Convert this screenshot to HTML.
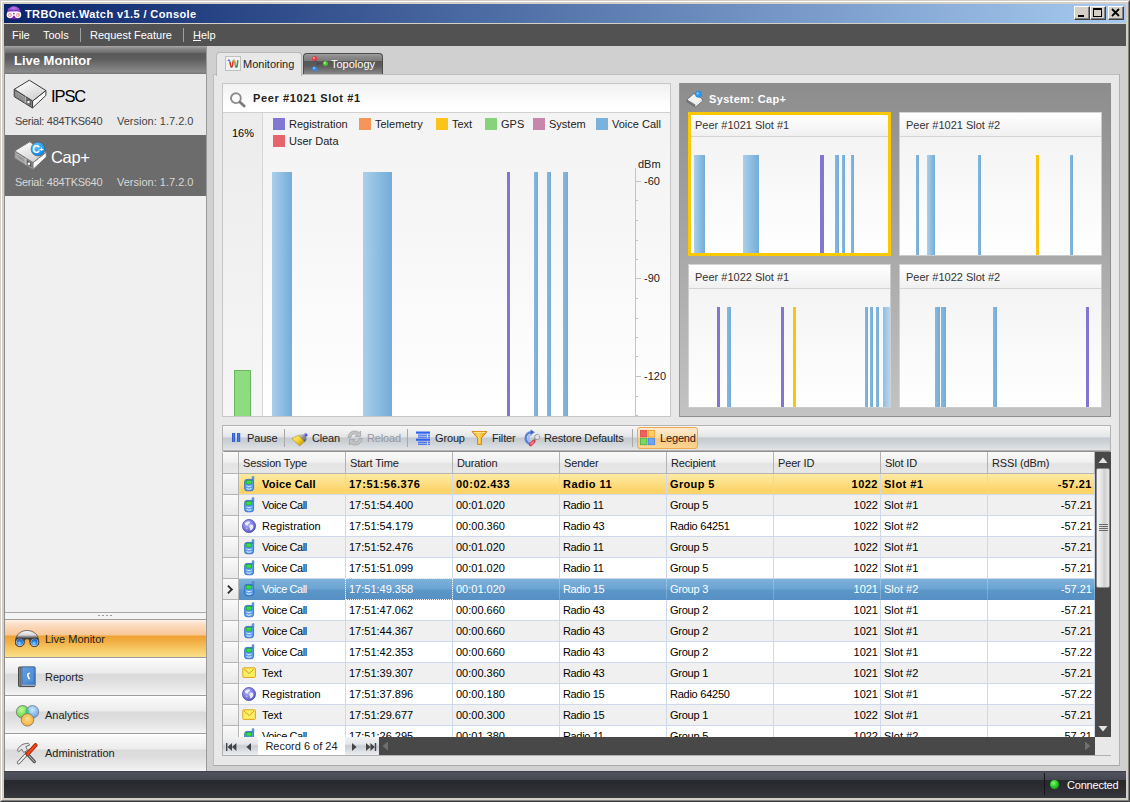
<!DOCTYPE html>
<html lang="en">
<head>
<meta charset="utf-8">
<title>TRBOnet.Watch v1.5 / Console</title>
<style>
*{box-sizing:border-box;margin:0;padding:0}
html,body{width:1130px;height:802px;overflow:hidden;background:#d4d0c8}
body{font-family:"Liberation Sans",sans-serif;font-size:11px;color:#000;position:relative}
div,span,svg{position:absolute}
span{white-space:nowrap}
/* window frame */
#frame{left:0;top:0;width:1130px;height:802px;background:#d4d0c8;border:1px solid;border-color:#d4d0c8 #404040 #404040 #d4d0c8}
#frame2{left:1px;top:1px;width:1128px;height:800px;border:1px solid;border-color:#fff #808080 #808080 #fff}
#title{left:4px;top:4px;width:1122px;height:19px;background:linear-gradient(90deg,#0a246a 0%,#a6caf0 100%)}
#title .tt{left:21px;top:4px;color:#fff;font-weight:bold;font-size:11px;letter-spacing:.4px}
.cb{top:6px;width:16px;height:14px;background:#d4d0c8;border:1px solid;border-color:#fff #404040 #404040 #fff;box-shadow:inset -1px -1px 0 #808080}
#menu{left:4px;top:24px;width:1122px;height:22px;background:#525252}
#menu span{top:5px;color:#fff}
#menu i{position:absolute;top:4px;width:1px;height:14px;background:#a0a0a0}
/* sidebar */
#side{left:4px;top:46px;width:203px;height:725px;background:#f0f0f0;border-left:1px solid #8c8c8c;border-right:1px solid #9a9a9a}
#shead{left:0;top:0;width:201px;height:28px;background:linear-gradient(180deg,#ababab 0,#9a9a9a 1px,#858585 3px,#6c6c6c 7px,#5a5a5a 7px,#5d5d5d 13px,#8b8b8b 26px,#7a7a7a 27px,#7a7a7a 28px)}
#shead span{left:9px;top:7px;color:#fff;font-weight:bold;font-size:13px}
.sitem{left:0;width:201px;height:61px}
.sitem .nm{left:46px;top:13px;font-size:16.5px;letter-spacing:-1.1px}
.sitem .s1{left:10px;top:41px;color:#444;letter-spacing:-.3px}
.sitem .s2{left:112px;top:41px;color:#444}
#it1{top:28px;background:#e9e9e9}
#it2{top:89px;background:#6c6c6c}
#it2 .nm{color:#fff;letter-spacing:-.3px}
#it2 .s1,#it2 .s2{color:#d8d8d8}
#split{left:0;top:566px;width:201px;height:7px;background:#f4f4f4;border-top:1px solid #a8a8a8}
.nav{left:0;width:201px;height:38px;background:linear-gradient(180deg,#9c9c9c 0,#9c9c9c 1px,#fff 1px,#fff 2px,#f8f8f8 4px,#ececec 16px,#dadada 17px,#dedede 24px,#eeeeee 35px,#f6f6f6 38px)}
.nav span{left:40px;top:14px;color:#222}
.nav.on{background:linear-gradient(180deg,#9c9c9c 0,#9c9c9c 1px,#fff2e6 1px,#fbdcc2 6px,#f9c796 16px,#efa234 17px,#f2ad42 22px,#f7c864 30px,#fbe08c 38px)}
/* status */
#status{left:4px;top:771px;width:1122px;height:27px;background:linear-gradient(180deg,#3c3e46 0,#50535c 2px,#4a4d56 5px,#44474f 9px,#27292d 9px,#2a2c31 16px,#36383e 27px)}
#status span{left:1063px;top:8px;color:#fff;letter-spacing:-.2px}
#status i{position:absolute;left:1040px;top:2px;width:1px;height:22px;background:#15161a}
#status b{position:absolute;left:1046px;top:9px;width:9px;height:9px;border-radius:50%;background:radial-gradient(circle at 40% 35%,#7dfc6a 0,#25c425 50%,#128a12 100%)}
/* main */
#main{left:207px;top:46px;width:919px;height:725px;background:#d0d0d0}
#page{left:213px;top:74px;width:907px;height:692px;background:#e8e8e8;border:1px solid #bdbdbd;border-right-color:#b0b0b0;border-bottom-color:#a8a8a8}
.tab{height:22px;border:1px solid #a0a0a0;border-bottom:none;border-radius:4px 4px 0 0}
#tab1{left:216px;top:52px;width:86px;height:24px;background:#e8e8e8;border-color:#b8b8b8}
#tab1 span{left:26px;top:5px;color:#222}
#tab2{left:303px;top:53px;width:80px;height:21px;background:linear-gradient(180deg,#a2a2a2 0,#8e8e8e 2px,#7a7a7a 7px,#565656 7px,#5c5c5c 12px,#888 20px);border-color:#4c4c4c}
#tab2 span{left:27px;top:4px;color:#fff}
/* chart panel */
#cp{left:222px;top:83px;width:449px;height:334px;background:linear-gradient(180deg,#f3f3f3 0,#f6f6f6 40%,#fff 100%);border:1px solid #c6c6c6}
#cph{left:0;top:0;width:447px;height:29px;background:linear-gradient(180deg,#f1f1f1 0,#fafafa 50%,#fff 85%);border-bottom:1px solid #d0d0d0}
#cph span{left:30px;top:8px;font-weight:bold;font-size:11px;color:#222;letter-spacing:.62px}
#pc{left:0;top:29px;width:40px;height:303px;background:linear-gradient(180deg,#ececec,#f6f6f6);border-right:1px solid #d6d6d6}
#pc span{left:9px;top:14px}
#gb{left:11px;top:257px;width:17px;height:46px;background:#8edb80;border:1px solid #6ab85e;border-bottom:none}
.lg{width:12px;height:12px}
.lt{color:#222}
.bar.b{background:linear-gradient(90deg,#aacfea,#74acd8)}
.bar.bl{background:linear-gradient(90deg,#8fbde2,#b8d6ec)}
.bar.bs{background:linear-gradient(90deg,#86b8de,#74acd8)}
.bar.p{background:#8177d3}
.bar.y{background:#fcc50d}
.ax{color:#222}
/* system panel */
#sp{left:679px;top:83px;width:432px;height:334px;background:linear-gradient(180deg,#8d8d8d,#c3c3c3);border:1px solid #8e8e8e;border-top-color:#8d8d8d;border-left-color:#999}
#sp>span{left:29px;top:9px;color:#fff;font-weight:bold;letter-spacing:.35px}
.mini{width:203px;height:144px;background:linear-gradient(180deg,#f4f4f4 0,#f4f4f4 24px,#f7f7f7 40%,#fff 100%);border:1px solid rgba(110,110,110,.3)}
.mini .mh{left:0;top:0;width:201px;height:24px;background:linear-gradient(180deg,#fff,#f0f0f0);border-bottom:1px solid #d4d4d4}
.mini span{left:6px;top:6px;color:#333}
.mini.on{border:3px solid #fcc800}
.mini.on .mh{width:197px;height:22px}
.mini.on span{left:4px;top:4px}
/* toolbar */
#tb{left:222px;top:425px;width:889px;height:26px;background:linear-gradient(180deg,#f6f6f6 0,#f0f0f0 5px,#e2e4e6 11px,#c4cad0 12px,#ccd1d6 16px,#e2e4e6 24px);border:1px solid #b4b4b4}
#tb span{top:6px;color:#222;letter-spacing:-.15px}
#tb span.dis{color:#9898a0}
#tb i{position:absolute;top:3px;width:1px;height:18px;background:#a8a8a8}
#lgb{left:414px;top:1px;width:61px;height:22px;border:1px solid #eda850;border-radius:3px;background:linear-gradient(180deg,#fdebd0 0,#fcdcaa 9px,#fac67c 11px,#fbcf8a 16px,#fcd898 22px)}
/* grid */
#grid{left:222px;top:451px;width:889px;height:305px;background:#fff;border:1px solid #b0b0b0;border-top-color:#8e8e8e;border-radius:3px 0 0 0}
.gh{background:linear-gradient(180deg,#fafafa 0,#f0f0f0 10px,#e3e3e3 12px,#e8e8e8 21px)}
.ghc{border-right:1px solid #b4b4b4;border-bottom:1px solid #b4b4b4}
.ghc span{left:4px;top:5px;color:#222;letter-spacing:-.15px}
.row{left:223px;width:872px;height:21px;background:#fff}
.row.alt{background:#f0f0f0}
.row.hot{background:linear-gradient(180deg,#fdeaa4 0,#fddf86 9px,#fcd66c 15px,#fcd468 20px);font-weight:bold;letter-spacing:.5px}
.row.sel{background:linear-gradient(180deg,#7db2da 0,#6ba3d2 10px,#5c97c9 11px,#558fc4 21px);color:#fff}
.row .ind{left:0;top:0;width:16px;height:21px;background:linear-gradient(180deg,#fafafa,#e8e8e8);border-right:1px solid #b4b4b4;border-bottom:1px solid #b4b4b4}
.row .ind i{position:absolute;left:2px;top:7px;width:7px;height:7px;border-right:2.4px solid #2a2a2a;border-top:2.4px solid #2a2a2a;transform:rotate(45deg) scale(.9,.9);transform-origin:center}
.c{top:0;height:21px;width:107px;border-right:1px solid #d0d8ec;border-bottom:1px solid #d0d8ec}
.c span{left:3px;top:4px}
.c.num span{left:auto;right:2px}
.c0{left:16px}.c1{left:123px}.c2{left:230px}.c3{left:337px;letter-spacing:-.35px}.c4{left:444px;letter-spacing:-.25px}.c5{left:551px}.c6{left:658px}.c7{left:765px}
.c0 span{left:23px}
.row.hot .c3{letter-spacing:.5px}.row.hot .c4{letter-spacing:.35px}
.ri{left:3px;top:2px}
.row.sel .c{border-right-color:rgba(255,255,255,.22);border-bottom-color:transparent}
.c.foc::after{content:"";position:absolute;left:-1px;top:-1px;width:108px;height:22px;box-sizing:border-box;border:1px dotted #f4f8fc}
#gclip{left:223px;top:452px;width:872px;height:285px;overflow:hidden}
/* scrollbars */
#vs{left:1095px;top:452px;width:16px;height:285px;background:#484848}
#vth{left:1px;top:16px;width:14px;height:120px;border:1px solid #8a8a8a;border-radius:2px;background:linear-gradient(90deg,#f4f4f4 0,#e4e4e4 40%,#cfcfcf 60%,#e6e6e6 100%)}
#hs{left:379px;top:737px;width:716px;height:18px;background:#484848}
#nvb{left:223px;top:737px;width:156px;height:18px;background:linear-gradient(180deg,#f2f2f2 0,#e4e6ea 7px,#c8ccd4 9px,#d4d8de 12px,#eceef0 18px)}
#nvb span{left:35px;top:0;color:#222;background:#fff;height:18px;line-height:19px;width:87px;text-align:center}
#corner{left:1095px;top:737px;width:16px;height:18px;background:#e8e8e8}
</style>
</head>
<body>
<div id="frame"></div><div id="frame2"></div>
<div id="title">
<svg style="left:2px;top:2px" width="16" height="16" viewBox="0 0 16 16"><defs><radialGradient id="ow" cx=".5" cy=".2" r=".8"><stop offset="0" stop-color="#c07cf0"/><stop offset=".6" stop-color="#8a30c0"/><stop offset="1" stop-color="#5a1090"/></radialGradient></defs><ellipse cx="7.9" cy="6.9" rx="7" ry="6.7" fill="url(#ow)"/><path d="M2.5 5.6Q7.9 2.4 13.3 5.6" fill="none" stroke="#5a1a98" stroke-width=".8"/><circle cx="4" cy="8.8" r="3.4" fill="#fff"/><circle cx="11.8" cy="8.8" r="3.4" fill="#fff"/><rect x="5" y="5.6" width="6" height="4" fill="#fff"/><circle cx="3.9" cy="9" r="2.1" fill="#f4a0a8"/><circle cx="11.9" cy="9" r="2.1" fill="#f4a0a8"/><circle cx="3.6" cy="9.4" r=".8" fill="#fff"/><circle cx="11.6" cy="9.4" r=".8" fill="#fff"/><rect x="7" y="7.2" width="1.8" height="1" fill="#6a1aa8"/><path d="M6.2 12.4L7.9 9.9L9.6 12.4Z" fill="#7a28b0"/></svg>
<span class="tt">TRBOnet.Watch v1.5 / Console</span>
</div>
<div class="cb" style="left:1074px"><svg width="14" height="12" style="left:0;top:0"><rect x="3" y="8" width="6" height="2" fill="#000"/></svg></div>
<div class="cb" style="left:1090px"><svg width="14" height="12" style="left:0;top:0"><rect x="2.5" y="1.5" width="8" height="8" fill="none" stroke="#000"/><rect x="2" y="1" width="9" height="2" fill="#000"/></svg></div>
<div class="cb" style="left:1108px"><svg width="14" height="12" style="left:0;top:0"><path d="M3 2l7 7M10 2l-7 7" stroke="#000" stroke-width="1.8"/></svg></div>
<div id="menu">
<span style="left:8px">File</span><span style="left:39px">Tools</span><i style="left:76px"></i><span style="left:86px">Request Feature</span><i style="left:179px"></i><span style="left:189px"><u>H</u>elp</span>
</div>

<div id="side">
<div id="shead"><span>Live Monitor</span></div>
<div class="sitem" id="it1"><svg style="left:3px;top:2px" width="50" height="38" viewBox="0 0 50 38"><defs><linearGradient id="dg1" x1="0.2" y1="0" x2="0.8" y2="1"><stop offset="0" stop-color="#ffffff"/><stop offset="1" stop-color="#cdcdcd"/></linearGradient></defs><g transform="translate(0,0)"><path d="M6.2 13.2L24.5 25V32L6.2 20.6Z" fill="#8a8a8a" stroke="#3c3c3c" stroke-linejoin="round"/><path d="M24.6 25L37.9 14.5V19.4L24.6 31.9Z" fill="#fbfbfb" stroke="#3c3c3c" stroke-linejoin="round"/><path d="M21.3 4.2L37.9 14.5L24.6 25L6.3 13.3Z" fill="url(#dg1)" stroke="#3c3c3c" stroke-linejoin="round"/><path d="M8.8 16.2L15.8 20.6V24.2L8.8 19.8Z" fill="#b4b4b4"/><path d="M9 17.6L15.6 21.8M9 19L15.6 23.2" stroke="#6a6a6a" stroke-width=".7"/><path d="M17.3 20.4V27.3" stroke="#c8c8c8" stroke-width=".8"/><path d="M18.4 22.2L23.2 25.2V30L18.4 27Z" fill="#5e5e5e"/><rect x="19.4" y="25" width="2.2" height="2.2" fill="#fff"/></g></svg><span class="nm">IPSC</span><span class="s1">Serial: 484TKS640</span><span class="s2">Version: 1.7.2.0</span></div>
<div class="sitem" id="it2"><svg style="left:3px;top:1px" width="50" height="38" viewBox="0 0 50 38"><defs><linearGradient id="dg2" x1="0.2" y1="0" x2="0.8" y2="1"><stop offset="0" stop-color="#ffffff"/><stop offset="1" stop-color="#cdcdcd"/></linearGradient></defs><g transform="translate(0.4,1.6)"><path d="M6.2 13.2L24.5 25V32L6.2 20.6Z" fill="#a6a6a6" stroke="#777" stroke-linejoin="round"/><path d="M24.6 25L37.9 14.5V19.4L24.6 31.9Z" fill="#fbfbfb" stroke="#777" stroke-linejoin="round"/><path d="M21.3 4.2L37.9 14.5L24.6 25L6.3 13.3Z" fill="url(#dg2)" stroke="#777" stroke-linejoin="round"/><path d="M8.8 16.2L15.8 20.6V24.2L8.8 19.8Z" fill="#c4c4c4"/><path d="M9 17.6L15.6 21.8M9 19L15.6 23.2" stroke="#6a6a6a" stroke-width=".7"/><path d="M17.3 20.4V27.3" stroke="#c8c8c8" stroke-width=".8"/><path d="M18.4 22.2L23.2 25.2V30L18.4 27Z" fill="#5e5e5e"/><rect x="19.4" y="25" width="2.2" height="2.2" fill="#fff"/></g><defs><radialGradient id="cb" cx=".4" cy=".3" r=".8"><stop offset="0" stop-color="#6cc4ff"/><stop offset=".6" stop-color="#1c9cf4"/><stop offset="1" stop-color="#0c78d8"/></radialGradient></defs><circle cx="30.1" cy="13" r="7" fill="url(#cb)" stroke="#555" stroke-width=".6"/><text x="24.2" y="17" font-family="Liberation Sans,sans-serif" font-weight="bold" font-size="10.5" fill="#fff">C</text><text x="31" y="15.7" font-family="Liberation Sans,sans-serif" font-weight="bold" font-size="8" fill="#fff">+</text></svg><span class="nm">Cap+</span><span class="s1">Serial: 484TKS640</span><span class="s2">Version: 1.7.2.0</span></div>
<div id="split"><svg style="left:93px;top:1px" width="16" height="3"><g fill="#9a9a9a"><rect x="0" y="1" width="2" height="1"/><rect x="4" y="1" width="2" height="1"/><rect x="8" y="1" width="2" height="1"/><rect x="12" y="1" width="2" height="1"/></g></svg></div>
<div class="nav on" style="top:573px"><svg style="left:10px;top:11px" width="26" height="20" viewBox="0 0 26 20"><defs><linearGradient id="bg1" x1="0" y1="0" x2="0" y2="1"><stop offset="0" stop-color="#fafafa"/><stop offset=".28" stop-color="#d8d8d8"/><stop offset=".5" stop-color="#3c3c3c"/><stop offset=".75" stop-color="#6a6a6a"/><stop offset="1" stop-color="#3a3a3a"/></linearGradient><radialGradient id="bl" cx=".45" cy=".7" r=".75"><stop offset="0" stop-color="#9ad4ff"/><stop offset=".55" stop-color="#2c84e0"/><stop offset="1" stop-color="#0a4ca8"/></radialGradient></defs><path d="M.3 12.5C.3 3.4 7 .5 12.1 .5C17.2 .5 23.9 3.4 23.9 12.5V13C23.9 17.6 15 17.6 15 13C15 10 13.6 8.8 12.1 8.8C10.6 8.8 9.2 10 9.2 13C9.2 17.6 .3 17.6 .3 13Z" fill="url(#bg1)" stroke="#3a3a3a" stroke-width=".7"/><circle cx="4.8" cy="12.4" r="4.2" fill="#e6e6e6" stroke="#2e2e2e" stroke-width=".8"/><circle cx="19.4" cy="12.4" r="4.2" fill="#e6e6e6" stroke="#2e2e2e" stroke-width=".8"/><circle cx="4.8" cy="12.3" r="3.2" fill="url(#bl)"/><circle cx="19.4" cy="12.3" r="3.2" fill="url(#bl)"/></svg><span>Live Monitor</span></div>
<div class="nav" style="top:611px"><svg style="left:12px;top:9px" width="20" height="22" viewBox="0 0 20 22"><defs><linearGradient id="bk" x1="0" y1="0" x2="1" y2="1"><stop offset="0" stop-color="#6aa6e6"/><stop offset="1" stop-color="#3a78c4"/></linearGradient></defs><rect x="1.5" y="1" width="16.5" height="19.6" rx="1" fill="#555" stroke="#333" stroke-width=".8"/><rect x="5" y="1" width="13" height="18" fill="url(#bk)" stroke="#2d5c9c" stroke-width=".6"/><rect x="2.2" y="1.4" width="1" height="18.6" fill="#8a8a8a"/><rect x="3.8" y="1.4" width=".8" height="18.6" fill="#9a9a9a"/><rect x="7" y="3.5" width="9" height="12.5" fill="#5a96dc" opacity=".7"/><path d="M12.5 6.5c-2 .4-3 2-2.4 3.8c.5 1.4 1.4 1.6 1.2 3h1.6c.4-1.8-1-2.4-1.2-3.6c-.2-1.2.6-2 1.4-2.4z" fill="#fff"/><path d="M5 19.2h13" stroke="#dfe8f4" stroke-width=".8"/></svg><span>Reports</span></div>
<div class="nav" style="top:649px"><svg style="left:10px;top:9px" width="26" height="24" viewBox="0 0 26 24"><defs><radialGradient id="ag" cx=".4" cy=".35" r=".7"><stop offset="0" stop-color="#c4f8a0"/><stop offset="1" stop-color="#4cd428"/></radialGradient><radialGradient id="ab" cx=".5" cy=".35" r=".7"><stop offset="0" stop-color="#cce6ff"/><stop offset="1" stop-color="#4a98f0"/></radialGradient><radialGradient id="ao" cx=".5" cy=".4" r=".7"><stop offset="0" stop-color="#ffdc88"/><stop offset="1" stop-color="#f8a41c"/></radialGradient></defs><circle cx="7.6" cy="7.8" r="6.3" fill="url(#ag)" stroke="#707070" stroke-width=".8"/><circle cx="17.4" cy="7.8" r="6.3" fill="url(#ab)" stroke="#707070" stroke-width=".8" opacity=".92"/><path d="M12.5 3.9a6.3 6.3 0 0 1 0 7.8a6.3 6.3 0 0 1 0-7.8z" fill="#38d060" opacity=".85"/><circle cx="12.5" cy="15.8" r="6.3" fill="url(#ao)" stroke="#707070" stroke-width=".8" opacity=".93"/></svg><span>Analytics</span></div>
<div class="nav" style="top:687px"><svg style="left:10px;top:9px" width="26" height="24" viewBox="0 0 26 24"><path d="M3.6 20.6L14.8 8.6" stroke="#555" stroke-width="3.4" stroke-linecap="round"/><path d="M3.6 20.6L14.8 8.6" stroke="#f4f4f4" stroke-width="2" stroke-linecap="round"/><path d="M2.4 8.2C4 4 8 1 13.6 1.4L14.6 3.2L10.8 4.6L12.6 8.4L8.6 10.4L6.8 7.2L3.6 9.8Z" fill="#e6e6e6" stroke="#555" stroke-width=".8" stroke-linejoin="round"/><path d="M11.6 11.4L19.4 19.6" stroke="#444" stroke-width="3" stroke-linecap="round"/><path d="M11.6 11.4L19.4 19.6" stroke="#b0b0b0" stroke-width="1.2" stroke-linecap="round"/><path d="M12.6 12L20.6 3.2" stroke="#a82000" stroke-width="4" stroke-linecap="round"/><path d="M12.6 12L20.6 3.2" stroke="#f04818" stroke-width="2.4" stroke-linecap="round"/></svg><span>Administration</span></div>
</div>

<div id="main"></div>
<div id="page"></div>
<div class="tab" id="tab2"><svg style="left:6px;top:1px" width="22" height="18" viewBox="0 0 22 18"><path d="M4.6 3.6L8 8.6L4.6 13.6M8 8.6H15" fill="none" stroke="#444" stroke-width=".7"/><circle cx="4.6" cy="3.6" r="2.5" fill="#e63a44"/><circle cx="4" cy="3" r=".9" fill="#f8a8a8"/><circle cx="4.6" cy="13.7" r="2.5" fill="#3a86e0"/><circle cx="4" cy="13.1" r=".9" fill="#a8d0f8"/><circle cx="15.4" cy="8.5" r="2.5" fill="#4cc82c"/><circle cx="14.8" cy="7.9" r=".9" fill="#c0f4a8"/></svg><span>Topology</span></div>
<div class="tab" id="tab1"><svg style="left:8px;top:3px" width="16" height="15" viewBox="0 0 16 15"><rect x=".5" y=".5" width="15" height="14" fill="#f2f2f2" stroke="#c0c0c0"/><path d="M3 5C3.6 3.4 4.6 3.6 5 6L5.6 9.6C6 11.6 7 11.6 7.4 9.6L8 5.6C8.4 3.6 9.4 3.6 9.8 5.6L10.4 9.6C10.8 11.6 11.8 11.6 12.2 9.6L12.8 4.4" fill="none" stroke="#3a7ad8" stroke-width="1.2"/><path d="M5 6L5.6 9.6C6 11.6 7 11.6 7.4 9.6L8 5.6" fill="none" stroke="#e03820" stroke-width="1.3"/><path d="M8 5.6C8.4 3.6 9.4 3.6 9.8 5.6L10.4 9.6" fill="none" stroke="#f0a010" stroke-width="1.3"/><path d="M10.4 9.6C10.8 11.6 11.8 11.6 12.2 9.6L12.8 4.4" fill="none" stroke="#30a030" stroke-width="1.3"/></svg><span>Monitoring</span></div>

<div id="cp">
<div id="cph"><svg style="left:6px;top:7px" width="18" height="17" viewBox="0 0 18 17"><circle cx="6.9" cy="7.2" r="4.9" fill="#fbfbfb" stroke="#8c8c8c" stroke-width="1.9"/><path d="M10.8 11L15.2 15" stroke="#7c7c7c" stroke-width="2.8" stroke-linecap="round"/></svg><span>Peer #1021 Slot #1</span></div>
<div id="pc"><span>16%</span><div id="gb"></div></div>
</div>
<div class="lg" style="left:273px;top:118px;background:#8277d2"></div><span class="lt" style="left:289px;top:118px">Registration</span>
<div class="lg" style="left:359px;top:118px;background:#f4965a"></div><span class="lt" style="left:375px;top:118px">Telemetry</span>
<div class="lg" style="left:436px;top:118px;background:#fcc419"></div><span class="lt" style="left:452px;top:118px">Text</span>
<div class="lg" style="left:485px;top:118px;background:#86d37a"></div><span class="lt" style="left:501px;top:118px">GPS</span>
<div class="lg" style="left:533px;top:118px;background:#c986ac"></div><span class="lt" style="left:549px;top:118px">System</span>
<div class="lg" style="left:596px;top:118px;background:#7ab2dc"></div><span class="lt" style="left:612px;top:118px">Voice Call</span>
<div class="lg" style="left:273px;top:135px;background:#e5646e"></div><span class="lt" style="left:289px;top:135px">User Data</span>
<div class="bar b" style="left:272px;top:172px;width:20px;height:244px"></div>
<div class="bar b" style="left:363px;top:172px;width:29px;height:244px"></div>
<div class="bar p" style="left:506.5px;top:172px;width:3px;height:244px"></div>
<div class="bar bs" style="left:534px;top:172px;width:4px;height:244px"></div>
<div class="bar bs" style="left:546.5px;top:172px;width:4px;height:244px"></div>
<div class="bar bs" style="left:563px;top:172px;width:4.5px;height:244px"></div>
<div style="left:635px;top:168px;width:1px;height:248px;background:#c4c4c4"></div><div style="left:636px;top:181px;width:5px;height:1px;background:#c4c4c4"></div><div style="left:636px;top:200px;width:2px;height:1px;background:#c4c4c4"></div><div style="left:636px;top:220px;width:2px;height:1px;background:#c4c4c4"></div><div style="left:636px;top:240px;width:2px;height:1px;background:#c4c4c4"></div><div style="left:636px;top:259px;width:2px;height:1px;background:#c4c4c4"></div><div style="left:636px;top:278px;width:5px;height:1px;background:#c4c4c4"></div><div style="left:636px;top:298px;width:2px;height:1px;background:#c4c4c4"></div><div style="left:636px;top:318px;width:2px;height:1px;background:#c4c4c4"></div><div style="left:636px;top:337px;width:2px;height:1px;background:#c4c4c4"></div><div style="left:636px;top:356px;width:2px;height:1px;background:#c4c4c4"></div><div style="left:636px;top:376px;width:5px;height:1px;background:#c4c4c4"></div><div style="left:636px;top:396px;width:2px;height:1px;background:#c4c4c4"></div><div style="left:636px;top:415px;width:2px;height:1px;background:#c4c4c4"></div>
<span class="ax" style="left:638px;top:158px">dBm</span>
<span class="ax" style="left:644px;top:175px">-60</span>
<span class="ax" style="left:644px;top:272px">-90</span>
<span class="ax" style="left:644px;top:370px">-120</span>

<div id="sp"><svg style="left:6px;top:6px" width="19" height="18" viewBox="0 0 19 18"><path d="M1.2 9.4L9.4 14.6V17L1.2 11.8Z" fill="#7c7c7c"/><path d="M9.4 14.6L16.4 9V11.2L9.4 17Z" fill="#f4f4f4"/><path d="M8 3.4L16.4 9L9.4 14.6L1.2 9.4Z" fill="#f2f2f2"/><path d="M1.2 9.4L8 3.4L16.4 9V11.2L9.4 17L1.2 11.8Z" fill="none" stroke="#5a5a5a" stroke-width=".7" stroke-linejoin="round"/><circle cx="12.4" cy="4.2" r="3.1" fill="#2a9cf4" stroke="#1a78d0" stroke-width=".5"/><circle cx="11.6" cy="3.4" r="1.1" fill="#8ad0ff"/></svg><span>System: Cap+</span></div>
<div class="mini on" style="left:688px;top:112px"><div class="mh"></div><span>Peer #1021 Slot #1</span></div>
<div class="mini" style="left:899px;top:112px"><div class="mh"></div><span>Peer #1021 Slot #2</span></div>
<div class="mini" style="left:688px;top:264px"><div class="mh"></div><span>Peer #1022 Slot #1</span></div>
<div class="mini" style="left:899px;top:264px"><div class="mh"></div><span>Peer #1022 Slot #2</span></div>
<div class="bar b" style="left:694px;top:154.5px;width:11px;height:98.5px"></div>
<div class="bar b" style="left:743px;top:154.5px;width:16px;height:98.5px"></div>
<div class="bar p" style="left:820.3px;top:154.5px;width:3.4px;height:98.5px"></div>
<div class="bar bs" style="left:835.3px;top:154.5px;width:3.4px;height:98.5px"></div>
<div class="bar bs" style="left:841.8px;top:154.5px;width:3.4px;height:98.5px"></div>
<div class="bar bs" style="left:851px;top:154.5px;width:3.4px;height:98.5px"></div>
<div class="bar bs" style="left:916px;top:154.5px;width:3.2px;height:100.5px"></div>
<div class="bar b" style="left:926.6px;top:154.5px;width:8.4px;height:100.5px"></div>
<div class="bar bs" style="left:977.8px;top:154.5px;width:3.2px;height:100.5px"></div>
<div class="bar y" style="left:1036px;top:154.5px;width:3.2px;height:100.5px"></div>
<div class="bar bs" style="left:1070.2px;top:154.5px;width:3.3px;height:100.5px"></div>
<div class="bar p" style="left:717px;top:306.5px;width:3.4px;height:100.5px"></div>
<div class="bar bs" style="left:727.3px;top:306.5px;width:3.7px;height:100.5px"></div>
<div class="bar p" style="left:780.8px;top:306.5px;width:3.3px;height:100.5px"></div>
<div class="bar y" style="left:792.9px;top:306.5px;width:3.2px;height:100.5px"></div>
<div class="bar bs" style="left:864.8px;top:306.5px;width:3.3px;height:100.5px"></div>
<div class="bar bs" style="left:869.7px;top:306.5px;width:3.2px;height:100.5px"></div>
<div class="bar bs" style="left:876px;top:306.5px;width:3.3px;height:100.5px"></div>
<div class="bar bl" style="left:882.6px;top:306.5px;width:7.4px;height:100.5px"></div>
<div class="bar bs" style="left:935px;top:306.5px;width:4.6px;height:100.5px"></div>
<div class="bar bs" style="left:941px;top:306.5px;width:4.8px;height:100.5px"></div>
<div class="bar bs" style="left:992.8px;top:306.5px;width:4.7px;height:100.5px"></div>
<div class="bar p" style="left:1086px;top:306.5px;width:3px;height:100.5px"></div>

<div id="tb">
<svg style="left:8px;top:6px" width="12" height="11" viewBox="0 0 12 11"><defs><linearGradient id="pg" x1="0" x2="1"><stop offset="0" stop-color="#2450c4"/><stop offset=".5" stop-color="#4c7ce8"/><stop offset="1" stop-color="#2450c4"/></linearGradient></defs><rect x="1" y="1" width="3.2" height="9" fill="url(#pg)"/><rect x="6" y="1" width="3.2" height="9" fill="url(#pg)"/></svg><span style="left:24px">Pause</span><i style="left:61px"></i>
<svg style="left:68px;top:4px" width="19" height="17" viewBox="0 0 19 17"><defs><linearGradient id="brg" x1="0" y1="0" x2="1" y2="1"><stop offset="0" stop-color="#fff8a0"/><stop offset=".5" stop-color="#f6d428"/><stop offset="1" stop-color="#b88a08"/></linearGradient><linearGradient id="frg" x1="0" y1="0" x2="1" y2="1"><stop offset="0" stop-color="#dcdcdc"/><stop offset=".5" stop-color="#8a9094"/><stop offset="1" stop-color="#4a5256"/></linearGradient></defs><path d="M12.6 6.8L15.8 4" stroke="#5048d8" stroke-width="3.2" stroke-linecap="butt"/><path d="M12.2 6L15.2 3.4" stroke="#9890f8" stroke-width="1.1" stroke-linecap="butt"/><path d="M7.4 5C9.6 3.6 13 4.4 15 6.8C16 8.6 15.4 10.6 13.6 12.4L7.4 5Z" fill="url(#frg)"/><path d="M1 8.6L7.6 5.2L13.2 11.8L8.6 15.9Z" fill="url(#brg)" stroke="#a88410" stroke-width=".6" stroke-linejoin="round"/></svg><span style="left:89px">Clean</span>
<svg style="left:123px;top:3px" width="18" height="18" viewBox="0 0 18 18"><g fill="#c4c4c4" stroke="#9c9c9c" stroke-width=".7" stroke-linejoin="round"><path d="M2 8.6C2 4.6 5.2 2 8.6 2C10.4 2 11.8 2.6 13 3.6L14.6 2V7.4H9.2L11 5.6C10.2 5 9.4 4.8 8.6 4.8C6.4 4.8 4.8 6.4 4.8 8.6Z"/><path d="M16 9.4C16 13.4 12.8 16 9.4 16C7.6 16 6.2 15.4 5 14.4L3.4 16V10.6H8.8L7 12.4C7.8 13 8.6 13.2 9.4 13.2C11.6 13.2 13.2 11.6 13.2 9.4Z"/></g></svg><span class="dis" style="left:144px">Reload</span><i style="left:184px"></i>
<svg style="left:192px;top:5px" width="16" height="15" viewBox="0 0 16 15"><g fill="#2f62f0"><rect x="1" y="0.5" width="14" height="2.2"/><rect x="3" y="3.6" width="9" height="1.1"/><rect x="13" y="3.6" width="2" height="1.1"/><rect x="3" y="5.6" width="9" height="1.1"/><rect x="13" y="5.6" width="2" height="1.1"/><rect x="1" y="7.6" width="14" height="2.2"/><rect x="3" y="10.7" width="9" height="1.1"/><rect x="13" y="10.7" width="2" height="1.1"/><rect x="3" y="12.7" width="9" height="1.1"/><rect x="13" y="12.7" width="2" height="1.1"/></g></svg><span style="left:212px">Group</span>
<svg style="left:248px;top:4px" width="17" height="16" viewBox="0 0 17 16"><defs><linearGradient id="fg" x1="0" x2="1"><stop offset="0" stop-color="#f8a010"/><stop offset=".45" stop-color="#ffd860"/><stop offset="1" stop-color="#f09000"/></linearGradient></defs><path d="M1 1.6H16L10.4 8V14.4H6.6V8Z" fill="url(#fg)" stroke="#d07800" stroke-width=".9" stroke-linejoin="round"/><path d="M2.6 2.4H14.4" stroke="#ffe9a0" stroke-width="1"/></svg><span style="left:269px">Filter</span>
<svg style="left:300px;top:3px" width="18" height="18" viewBox="0 0 18 18"><path d="M8.6 15.2A6 6 0 1 1 8.6 3.2" fill="none" stroke="#5a82d8" stroke-width="2.4"/><path d="M8.6 12.4A3.2 3.2 0 1 1 8.6 6" fill="none" stroke="#9ab4ec" stroke-width="1.4"/><path d="M7.6 0.4L11.8 3.2L7.6 6Z" fill="#3a66c8"/><path d="M10.2 12.2L14.6 8.4" stroke="#8a8a8a" stroke-width="2.2" stroke-linecap="round"/><circle cx="14.2" cy="8" r="2.6" fill="#e4e4e4" stroke="#8a8a8a" stroke-width=".8"/><circle cx="15.2" cy="7" r="1.2" fill="#e0e3e6"/><path d="M7.6 15.6L10.8 12.6" stroke="#e03848" stroke-width="3.4" stroke-linecap="round"/><path d="M7.8 15.2L10.4 12.8" stroke="#f8909a" stroke-width="1.2" stroke-linecap="round"/></svg><span style="left:321px">Restore Defaults</span><i style="left:409px"></i>
<div id="lgb"><svg style="left:2px;top:2px" width="16" height="16" viewBox="0 0 16 16"><rect x=".5" y=".5" width="6.4" height="6.4" fill="#f06060" stroke="#d84848" stroke-width=".8"/><rect x="8.3" y=".5" width="6.4" height="6.4" fill="#fcd070" stroke="#e8a020" stroke-width=".8"/><rect x=".5" y="8.3" width="6.4" height="6.4" fill="#78d868" stroke="#48b040" stroke-width=".8"/><rect x="8.3" y="8.3" width="6.4" height="6.4" fill="#6ca4f8" stroke="#4a84e0" stroke-width=".8"/></svg><span style="left:22px;top:4px">Legend</span></div>
</div>

<div id="grid"></div>
<div id="gclip"><div style="left:-223px;top:-452px">
<div class="gh" style="left:223px;top:452px;width:872px;height:22px"></div>
<div class="ghc" style="left:223px;top:452px;width:16px;height:22px"></div>
<div class="ghc" style="left:239px;top:452px;width:107px;height:22px"><span>Session Type</span></div>
<div class="ghc" style="left:346px;top:452px;width:107px;height:22px"><span>Start Time</span></div>
<div class="ghc" style="left:453px;top:452px;width:107px;height:22px"><span>Duration</span></div>
<div class="ghc" style="left:560px;top:452px;width:107px;height:22px"><span>Sender</span></div>
<div class="ghc" style="left:667px;top:452px;width:107px;height:22px"><span>Recipient</span></div>
<div class="ghc" style="left:774px;top:452px;width:107px;height:22px"><span>Peer ID</span></div>
<div class="ghc" style="left:881px;top:452px;width:107px;height:22px"><span>Slot ID</span></div>
<div class="ghc" style="left:988px;top:452px;width:107px;height:22px"><span>RSSI (dBm)</span></div>
<div class="row hot" style="top:474px">
<div class="ind"></div>
<div class="c c0"><svg class="ri" width="16" height="16" viewBox="0 0 16 16"><path d="M10.2 4V1.2C10.2 .4 11.8 .2 11.8 1V4.4Z" fill="#7ab4f0" stroke="#2f6cc4" stroke-width=".7"/><rect x="2.6" y="3.4" width="9" height="11.4" rx="2.4" fill="#5a9cf0" stroke="#2a66c0" stroke-width=".8"/><rect x="4.2" y="4.6" width="5.6" height="3.4" fill="#38e048" stroke="#1a9a30" stroke-width=".6"/><path d="M4.4 9.8C6 11 8 11 9.6 9.8" fill="none" stroke="#e4f0ff" stroke-width="1"/><path d="M4.6 12.4C6 13.4 8 13.4 9.4 12.4" fill="none" stroke="#e4f0ff" stroke-width="1.1"/></svg><span style="letter-spacing:.2px">Voice Call</span></div>
<div class="c c1"><span>17:51:56.376</span></div>
<div class="c c2"><span>00:02.433</span></div>
<div class="c c3"><span>Radio 11</span></div>
<div class="c c4"><span>Group 5</span></div>
<div class="c c5 num"><span>1022</span></div>
<div class="c c6"><span>Slot #1</span></div>
<div class="c c7 num"><span>-57.21</span></div>
</div>
<div class="row alt" style="top:495px">
<div class="ind"></div>
<div class="c c0"><svg class="ri" width="16" height="16" viewBox="0 0 16 16"><path d="M10.2 4V1.2C10.2 .4 11.8 .2 11.8 1V4.4Z" fill="#7ab4f0" stroke="#2f6cc4" stroke-width=".7"/><rect x="2.6" y="3.4" width="9" height="11.4" rx="2.4" fill="#5a9cf0" stroke="#2a66c0" stroke-width=".8"/><rect x="4.2" y="4.6" width="5.6" height="3.4" fill="#38e048" stroke="#1a9a30" stroke-width=".6"/><path d="M4.4 9.8C6 11 8 11 9.6 9.8" fill="none" stroke="#e4f0ff" stroke-width="1"/><path d="M4.6 12.4C6 13.4 8 13.4 9.4 12.4" fill="none" stroke="#e4f0ff" stroke-width="1.1"/></svg><span style="letter-spacing:-.4px">Voice Call</span></div>
<div class="c c1"><span>17:51:54.400</span></div>
<div class="c c2"><span>00:01.020</span></div>
<div class="c c3"><span>Radio 11</span></div>
<div class="c c4"><span>Group 5</span></div>
<div class="c c5 num"><span>1022</span></div>
<div class="c c6"><span>Slot #1</span></div>
<div class="c c7 num"><span>-57.21</span></div>
</div>
<div class="row" style="top:516px">
<div class="ind"></div>
<div class="c c0"><svg class="ri" width="16" height="16" viewBox="0 0 16 16"><defs><radialGradient id="gl" cx=".4" cy=".35" r=".75"><stop offset="0" stop-color="#b4b4f8"/><stop offset=".6" stop-color="#7878dc"/><stop offset="1" stop-color="#4a4ab0"/></radialGradient></defs><circle cx="7" cy="8" r="6.6" fill="url(#gl)" stroke="#4848a8" stroke-width=".7"/><path d="M3 5.4C4 3.6 6 3 7.6 3.6C8.4 4.6 7.6 5.6 6.6 6C5.6 6.4 6 7.6 5 7.6C4 7.6 3 6.6 3 5.4ZM8.6 6.6C10 6 11.4 7 11.4 8.6C11.4 10.4 10 12.4 8.6 12.4C7.6 12 8.4 10.4 7.6 9.6C7 8.6 7.4 7 8.6 6.6ZM4.4 9.6C5.2 9.8 5.6 10.8 5.2 11.6C4.6 11.4 4.2 10.4 4.4 9.6Z" fill="#ececff"/></svg><span>Registration</span></div>
<div class="c c1"><span>17:51:54.179</span></div>
<div class="c c2"><span>00:00.360</span></div>
<div class="c c3"><span>Radio 43</span></div>
<div class="c c4"><span>Radio 64251</span></div>
<div class="c c5 num"><span>1022</span></div>
<div class="c c6"><span>Slot #2</span></div>
<div class="c c7 num"><span>-57.21</span></div>
</div>
<div class="row alt" style="top:537px">
<div class="ind"></div>
<div class="c c0"><svg class="ri" width="16" height="16" viewBox="0 0 16 16"><path d="M10.2 4V1.2C10.2 .4 11.8 .2 11.8 1V4.4Z" fill="#7ab4f0" stroke="#2f6cc4" stroke-width=".7"/><rect x="2.6" y="3.4" width="9" height="11.4" rx="2.4" fill="#5a9cf0" stroke="#2a66c0" stroke-width=".8"/><rect x="4.2" y="4.6" width="5.6" height="3.4" fill="#38e048" stroke="#1a9a30" stroke-width=".6"/><path d="M4.4 9.8C6 11 8 11 9.6 9.8" fill="none" stroke="#e4f0ff" stroke-width="1"/><path d="M4.6 12.4C6 13.4 8 13.4 9.4 12.4" fill="none" stroke="#e4f0ff" stroke-width="1.1"/></svg><span style="letter-spacing:-.4px">Voice Call</span></div>
<div class="c c1"><span>17:51:52.476</span></div>
<div class="c c2"><span>00:01.020</span></div>
<div class="c c3"><span>Radio 11</span></div>
<div class="c c4"><span>Group 5</span></div>
<div class="c c5 num"><span>1022</span></div>
<div class="c c6"><span>Slot #1</span></div>
<div class="c c7 num"><span>-57.21</span></div>
</div>
<div class="row" style="top:558px">
<div class="ind"></div>
<div class="c c0"><svg class="ri" width="16" height="16" viewBox="0 0 16 16"><path d="M10.2 4V1.2C10.2 .4 11.8 .2 11.8 1V4.4Z" fill="#7ab4f0" stroke="#2f6cc4" stroke-width=".7"/><rect x="2.6" y="3.4" width="9" height="11.4" rx="2.4" fill="#5a9cf0" stroke="#2a66c0" stroke-width=".8"/><rect x="4.2" y="4.6" width="5.6" height="3.4" fill="#38e048" stroke="#1a9a30" stroke-width=".6"/><path d="M4.4 9.8C6 11 8 11 9.6 9.8" fill="none" stroke="#e4f0ff" stroke-width="1"/><path d="M4.6 12.4C6 13.4 8 13.4 9.4 12.4" fill="none" stroke="#e4f0ff" stroke-width="1.1"/></svg><span style="letter-spacing:-.4px">Voice Call</span></div>
<div class="c c1"><span>17:51:51.099</span></div>
<div class="c c2"><span>00:01.020</span></div>
<div class="c c3"><span>Radio 11</span></div>
<div class="c c4"><span>Group 5</span></div>
<div class="c c5 num"><span>1022</span></div>
<div class="c c6"><span>Slot #1</span></div>
<div class="c c7 num"><span>-57.21</span></div>
</div>
<div class="row sel" style="top:579px">
<div class="ind"><i></i></div>
<div class="c c0"><svg class="ri" width="16" height="16" viewBox="0 0 16 16"><path d="M10.2 4V1.2C10.2 .4 11.8 .2 11.8 1V4.4Z" fill="#7ab4f0" stroke="#2f6cc4" stroke-width=".7"/><rect x="2.6" y="3.4" width="9" height="11.4" rx="2.4" fill="#5a9cf0" stroke="#2a66c0" stroke-width=".8"/><rect x="4.2" y="4.6" width="5.6" height="3.4" fill="#38e048" stroke="#1a9a30" stroke-width=".6"/><path d="M4.4 9.8C6 11 8 11 9.6 9.8" fill="none" stroke="#e4f0ff" stroke-width="1"/><path d="M4.6 12.4C6 13.4 8 13.4 9.4 12.4" fill="none" stroke="#e4f0ff" stroke-width="1.1"/></svg><span style="letter-spacing:-.4px">Voice Call</span></div>
<div class="c c1 foc"><span>17:51:49.358</span></div>
<div class="c c2"><span>00:01.020</span></div>
<div class="c c3"><span>Radio 15</span></div>
<div class="c c4"><span>Group 3</span></div>
<div class="c c5 num"><span>1021</span></div>
<div class="c c6"><span>Slot #2</span></div>
<div class="c c7 num"><span>-57.21</span></div>
</div>
<div class="row" style="top:600px">
<div class="ind"></div>
<div class="c c0"><svg class="ri" width="16" height="16" viewBox="0 0 16 16"><path d="M10.2 4V1.2C10.2 .4 11.8 .2 11.8 1V4.4Z" fill="#7ab4f0" stroke="#2f6cc4" stroke-width=".7"/><rect x="2.6" y="3.4" width="9" height="11.4" rx="2.4" fill="#5a9cf0" stroke="#2a66c0" stroke-width=".8"/><rect x="4.2" y="4.6" width="5.6" height="3.4" fill="#38e048" stroke="#1a9a30" stroke-width=".6"/><path d="M4.4 9.8C6 11 8 11 9.6 9.8" fill="none" stroke="#e4f0ff" stroke-width="1"/><path d="M4.6 12.4C6 13.4 8 13.4 9.4 12.4" fill="none" stroke="#e4f0ff" stroke-width="1.1"/></svg><span style="letter-spacing:-.4px">Voice Call</span></div>
<div class="c c1"><span>17:51:47.062</span></div>
<div class="c c2"><span>00:00.660</span></div>
<div class="c c3"><span>Radio 43</span></div>
<div class="c c4"><span>Group 2</span></div>
<div class="c c5 num"><span>1021</span></div>
<div class="c c6"><span>Slot #1</span></div>
<div class="c c7 num"><span>-57.21</span></div>
</div>
<div class="row alt" style="top:621px">
<div class="ind"></div>
<div class="c c0"><svg class="ri" width="16" height="16" viewBox="0 0 16 16"><path d="M10.2 4V1.2C10.2 .4 11.8 .2 11.8 1V4.4Z" fill="#7ab4f0" stroke="#2f6cc4" stroke-width=".7"/><rect x="2.6" y="3.4" width="9" height="11.4" rx="2.4" fill="#5a9cf0" stroke="#2a66c0" stroke-width=".8"/><rect x="4.2" y="4.6" width="5.6" height="3.4" fill="#38e048" stroke="#1a9a30" stroke-width=".6"/><path d="M4.4 9.8C6 11 8 11 9.6 9.8" fill="none" stroke="#e4f0ff" stroke-width="1"/><path d="M4.6 12.4C6 13.4 8 13.4 9.4 12.4" fill="none" stroke="#e4f0ff" stroke-width="1.1"/></svg><span style="letter-spacing:-.4px">Voice Call</span></div>
<div class="c c1"><span>17:51:44.367</span></div>
<div class="c c2"><span>00:00.660</span></div>
<div class="c c3"><span>Radio 43</span></div>
<div class="c c4"><span>Group 2</span></div>
<div class="c c5 num"><span>1021</span></div>
<div class="c c6"><span>Slot #1</span></div>
<div class="c c7 num"><span>-57.21</span></div>
</div>
<div class="row" style="top:642px">
<div class="ind"></div>
<div class="c c0"><svg class="ri" width="16" height="16" viewBox="0 0 16 16"><path d="M10.2 4V1.2C10.2 .4 11.8 .2 11.8 1V4.4Z" fill="#7ab4f0" stroke="#2f6cc4" stroke-width=".7"/><rect x="2.6" y="3.4" width="9" height="11.4" rx="2.4" fill="#5a9cf0" stroke="#2a66c0" stroke-width=".8"/><rect x="4.2" y="4.6" width="5.6" height="3.4" fill="#38e048" stroke="#1a9a30" stroke-width=".6"/><path d="M4.4 9.8C6 11 8 11 9.6 9.8" fill="none" stroke="#e4f0ff" stroke-width="1"/><path d="M4.6 12.4C6 13.4 8 13.4 9.4 12.4" fill="none" stroke="#e4f0ff" stroke-width="1.1"/></svg><span style="letter-spacing:-.4px">Voice Call</span></div>
<div class="c c1"><span>17:51:42.353</span></div>
<div class="c c2"><span>00:00.660</span></div>
<div class="c c3"><span>Radio 43</span></div>
<div class="c c4"><span>Group 2</span></div>
<div class="c c5 num"><span>1021</span></div>
<div class="c c6"><span>Slot #1</span></div>
<div class="c c7 num"><span>-57.22</span></div>
</div>
<div class="row alt" style="top:663px">
<div class="ind"></div>
<div class="c c0"><svg class="ri" width="16" height="16" viewBox="0 0 16 16"><rect x=".8" y="2.8" width="12.6" height="9.6" rx=".8" fill="#fdf066" stroke="#e0a418" stroke-width="1"/><path d="M2 3.8L7.1 8.6L12.2 3.8" fill="none" stroke="#d89c10" stroke-width="1"/></svg><span>Text</span></div>
<div class="c c1"><span>17:51:39.307</span></div>
<div class="c c2"><span>00:00.360</span></div>
<div class="c c3"><span>Radio 43</span></div>
<div class="c c4"><span>Group 1</span></div>
<div class="c c5 num"><span>1021</span></div>
<div class="c c6"><span>Slot #2</span></div>
<div class="c c7 num"><span>-57.21</span></div>
</div>
<div class="row" style="top:684px">
<div class="ind"></div>
<div class="c c0"><svg class="ri" width="16" height="16" viewBox="0 0 16 16"><defs><radialGradient id="gl" cx=".4" cy=".35" r=".75"><stop offset="0" stop-color="#b4b4f8"/><stop offset=".6" stop-color="#7878dc"/><stop offset="1" stop-color="#4a4ab0"/></radialGradient></defs><circle cx="7" cy="8" r="6.6" fill="url(#gl)" stroke="#4848a8" stroke-width=".7"/><path d="M3 5.4C4 3.6 6 3 7.6 3.6C8.4 4.6 7.6 5.6 6.6 6C5.6 6.4 6 7.6 5 7.6C4 7.6 3 6.6 3 5.4ZM8.6 6.6C10 6 11.4 7 11.4 8.6C11.4 10.4 10 12.4 8.6 12.4C7.6 12 8.4 10.4 7.6 9.6C7 8.6 7.4 7 8.6 6.6ZM4.4 9.6C5.2 9.8 5.6 10.8 5.2 11.6C4.6 11.4 4.2 10.4 4.4 9.6Z" fill="#ececff"/></svg><span>Registration</span></div>
<div class="c c1"><span>17:51:37.896</span></div>
<div class="c c2"><span>00:00.180</span></div>
<div class="c c3"><span>Radio 15</span></div>
<div class="c c4"><span>Radio 64250</span></div>
<div class="c c5 num"><span>1021</span></div>
<div class="c c6"><span>Slot #1</span></div>
<div class="c c7 num"><span>-57.22</span></div>
</div>
<div class="row alt" style="top:705px">
<div class="ind"></div>
<div class="c c0"><svg class="ri" width="16" height="16" viewBox="0 0 16 16"><rect x=".8" y="2.8" width="12.6" height="9.6" rx=".8" fill="#fdf066" stroke="#e0a418" stroke-width="1"/><path d="M2 3.8L7.1 8.6L12.2 3.8" fill="none" stroke="#d89c10" stroke-width="1"/></svg><span>Text</span></div>
<div class="c c1"><span>17:51:29.677</span></div>
<div class="c c2"><span>00:00.300</span></div>
<div class="c c3"><span>Radio 15</span></div>
<div class="c c4"><span>Group 1</span></div>
<div class="c c5 num"><span>1022</span></div>
<div class="c c6"><span>Slot #1</span></div>
<div class="c c7 num"><span>-57.21</span></div>
</div>
<div class="row" style="top:726px">
<div class="ind"></div>
<div class="c c0"><svg class="ri" width="16" height="16" viewBox="0 0 16 16"><path d="M10.2 4V1.2C10.2 .4 11.8 .2 11.8 1V4.4Z" fill="#7ab4f0" stroke="#2f6cc4" stroke-width=".7"/><rect x="2.6" y="3.4" width="9" height="11.4" rx="2.4" fill="#5a9cf0" stroke="#2a66c0" stroke-width=".8"/><rect x="4.2" y="4.6" width="5.6" height="3.4" fill="#38e048" stroke="#1a9a30" stroke-width=".6"/><path d="M4.4 9.8C6 11 8 11 9.6 9.8" fill="none" stroke="#e4f0ff" stroke-width="1"/><path d="M4.6 12.4C6 13.4 8 13.4 9.4 12.4" fill="none" stroke="#e4f0ff" stroke-width="1.1"/></svg><span style="letter-spacing:-.4px">Voice Call</span></div>
<div class="c c1"><span>17:51:26.295</span></div>
<div class="c c2"><span>00:01.380</span></div>
<div class="c c3"><span>Radio 11</span></div>
<div class="c c4"><span>Group 5</span></div>
<div class="c c5 num"><span>1022</span></div>
<div class="c c6"><span>Slot #2</span></div>
<div class="c c7 num"><span>-57.21</span></div>
</div>
</div></div>
<div id="vs"><svg style="left:0;top:0" width="16" height="16"><path d="M3.5 11L8 5.5L12.5 11Z" fill="#e4e4e4"/></svg><div id="vth"><svg style="left:2px;top:55px" width="9" height="9"><path d="M0 .5h9M0 2.5h9M0 4.5h9M0 6.5h9" stroke="#6a6a6a" stroke-width="1"/></svg></div><svg style="left:0;top:269px" width="16" height="16"><path d="M3.5 5L8 10.5L12.5 5Z" fill="#e4e4e4"/></svg></div>
<div id="nvb"><svg style="left:0;top:0" width="156" height="18"><g fill="#444"><rect x="3" y="6" width="1.4" height="8"/><path d="M9 6v8l-4.4-4zM13.4 6v8l-4.4-4z"/><path d="M28 6v8l-4.6-4z"/><path d="M129 6v8l4.6-4z"/><path d="M143 6v8l4.4-4zM147.4 6v8l4.4-4z"/><rect x="151.8" y="6" width="1.4" height="8"/></g></svg><span>Record 6 of 24</span></div>
<div id="hs"><svg style="left:0;top:0" width="716" height="18"><path d="M9 4.5v9l-5.4-4.5z" fill="#707070"/><path d="M706 4.5v9l5.4-4.5z" fill="#707070"/></svg></div>
<div id="corner"></div>

<div id="status"><i></i><b></b><span>Connected</span></div>
</body>
</html>
